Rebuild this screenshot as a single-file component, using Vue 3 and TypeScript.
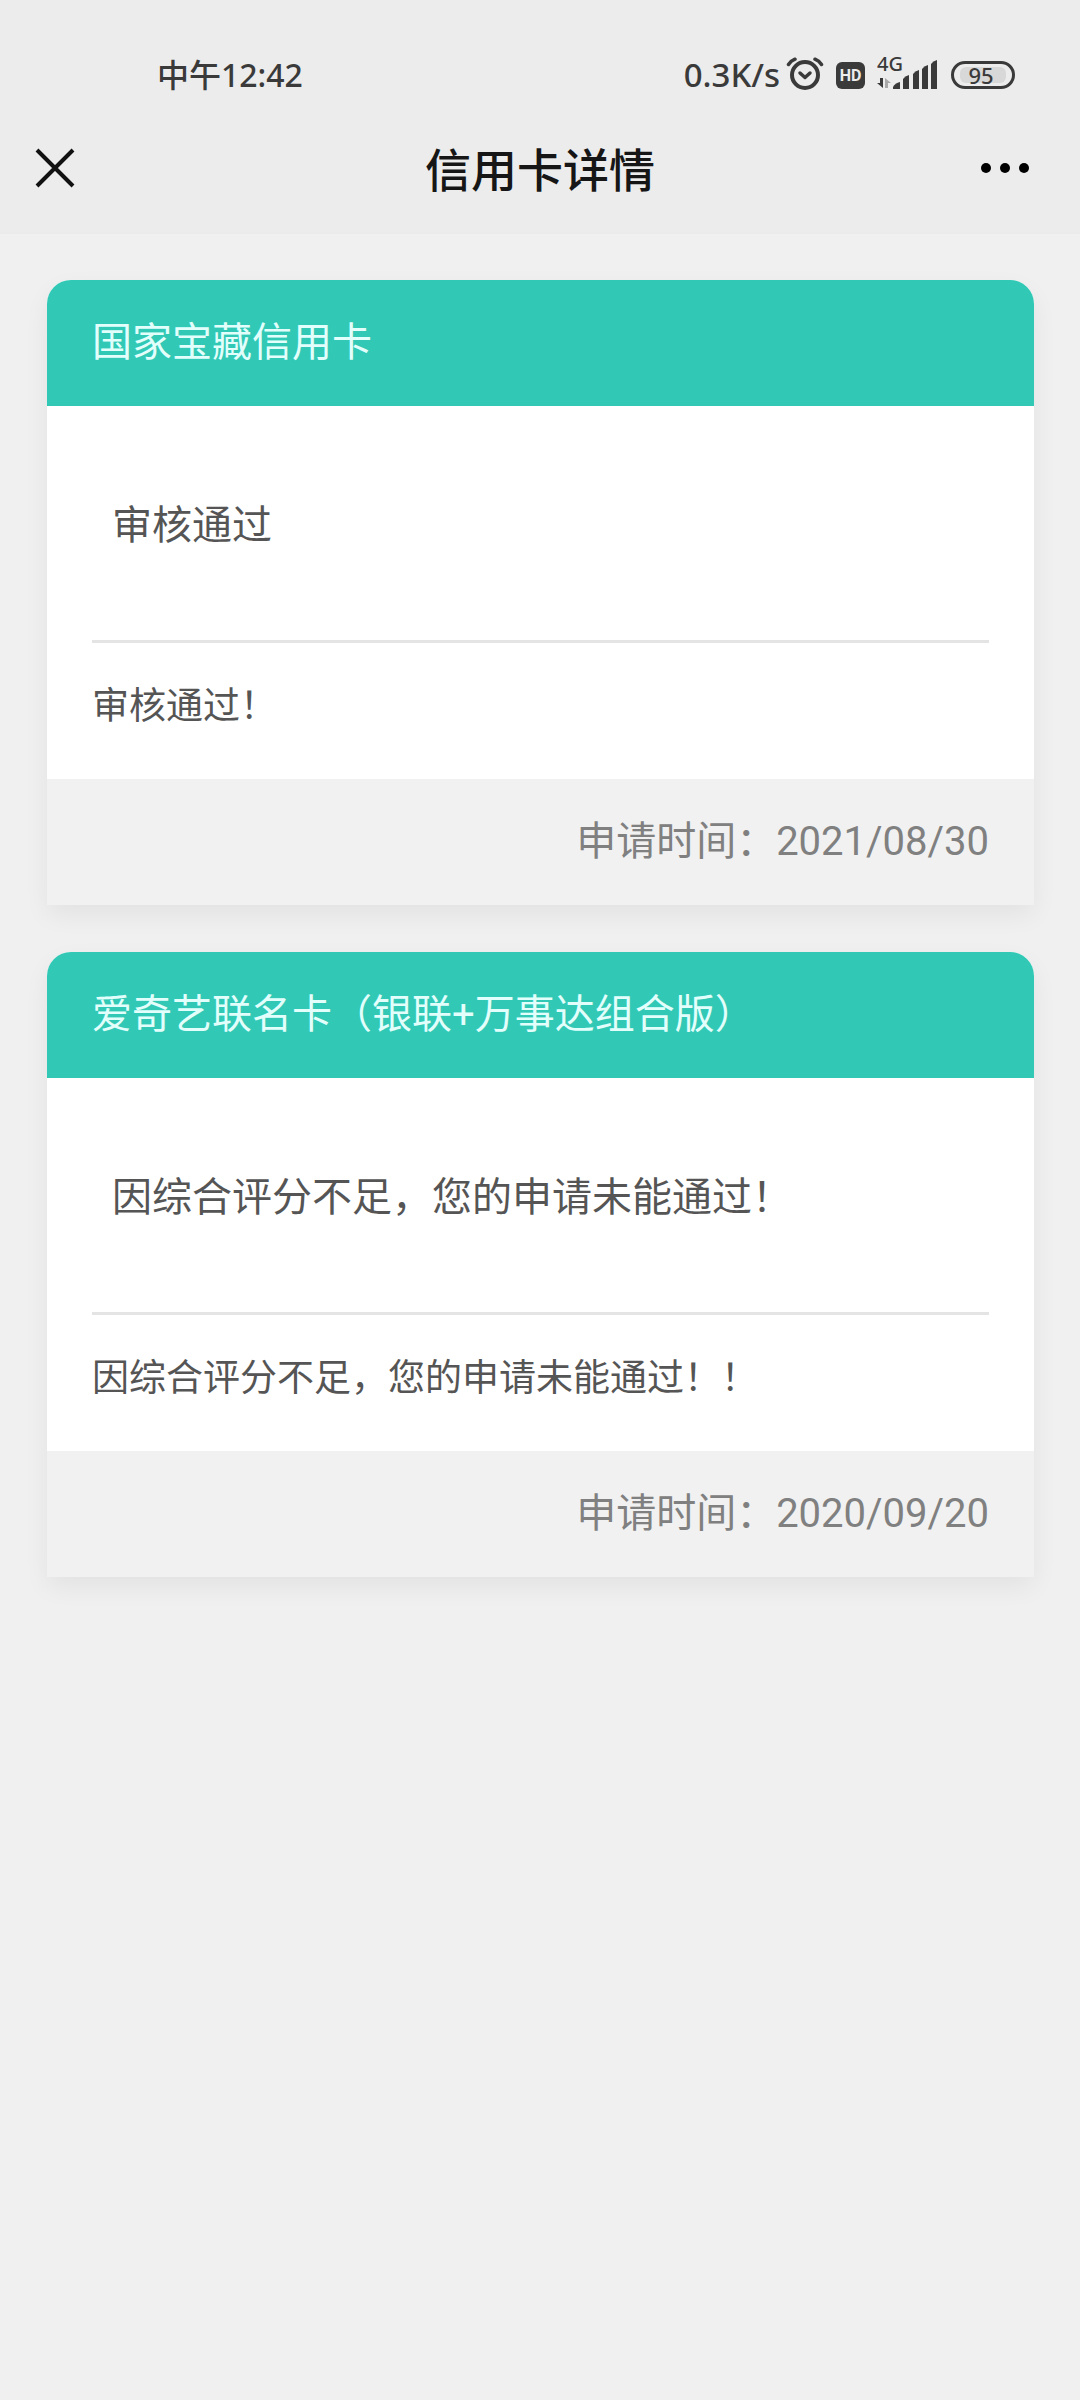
<script setup lang="ts">
interface Application {
  id: number
  name: string
  status: string
  detail: string
  appliedOn: string
}

const pageTitle = '信用卡详情'

const applications: Application[] = [
  {
    id: 1,
    name: '国家宝藏信用卡',
    status: '审核通过',
    detail: '审核通过！',
    appliedOn: '2021/08/30',
  },
  {
    id: 2,
    name: '爱奇艺联名卡（银联+万事达组合版）',
    status: '因综合评分不足，您的申请未能通过！',
    detail: '因综合评分不足，您的申请未能通过！！',
    appliedOn: '2020/09/20',
  },
]
</script>

<template>
  <div class="page">
    <header class="top">
      <div class="status-bar">
        <span class="clock">中午12:42</span>
        <div class="indicators">
          <div class="speed">
            <span>0.3K/s</span>
            <svg class="alarm" width="38" height="36" viewBox="0 0 38 36" aria-hidden="true">
              <g fill="none" stroke="#3a3a3a" stroke-width="4" stroke-linecap="round" stroke-linejoin="round">
                <circle cx="19" cy="18" r="13" />
                <path d="M14 16l5 4.500l5-4.500" stroke-width="3.500" />
                <path d="M2.500 7.500Q5 3.800 9 2.200M35.500 7.500Q33 3.800 29 2.200" stroke-width="3.500" />
              </g>
            </svg>
          </div>
          <span class="hd">HD</span>
          <svg class="signal" width="62" height="56" viewBox="0 -10 62 56" aria-hidden="true">
            <text class="network" x="0" y="14">4G</text>
            <g fill="#3a3a3a">
              <path d="M3 21h3v10L0 26h3z" />
              <path d="M8 31V21l6 5h-3v5z" fill="#a8a8a8" />
              <path d="M16 32v-2q2-4 7-5v7z" />
              <path d="M26 32V22q2-3 6-4v14z" />
              <path d="M36 32V17q2-3 6-4v19z" />
              <path d="M45 32V12q2-3 6-4v24z" />
              <path d="M54 32V7q2-3 6-4v29z" />
            </g>
          </svg>
          <span class="battery"><span class="charge">95</span></span>
        </div>
      </div>
      <nav class="nav">
        <button class="nav-button" type="button" aria-label="关闭">
          <svg width="40" height="40" viewBox="0 0 40 40" aria-hidden="true">
            <path d="M2 2L38 38M38 2L2 38" stroke="#111" stroke-width="4" fill="none" />
          </svg>
        </button>
        <h1 class="title">{{ pageTitle }}</h1>
        <button class="nav-button" type="button" aria-label="更多">
          <svg width="50" height="12" viewBox="0 0 50 12" aria-hidden="true">
            <circle cx="6" cy="6" r="5" />
            <circle cx="25" cy="6" r="5" />
            <circle cx="44" cy="6" r="5" />
          </svg>
        </button>
      </nav>
    </header>

    <main class="list">
      <article v-for="item in applications" :key="item.id" class="card">
        <h2 class="card-head">{{ item.name }}</h2>
        <div class="card-body">
          <p class="result">{{ item.status }}</p>
          <p class="detail">{{ item.detail }}</p>
        </div>
        <footer class="card-foot">
          申请时间：<time :datetime="item.appliedOn.replace(/\//g, '-')">{{ item.appliedOn }}</time>
        </footer>
      </article>
    </main>
  </div>
</template>

<style>
body {
  margin: 0;
  background: #f0f0f0;
}
</style>

<style scoped>
.page {
  font-family: Roboto, "Noto Sans CJK SC", sans-serif;
  color: #555;
}

.top {
  background: #ececec;
  border-bottom: 2px solid #ebebeb;
}

.status-bar {
  display: flex;
  align-items: center;
  justify-content: space-between;
  padding: 47px 65px 0 157px;
  height: 56px;
  font-family: "Noto Sans", "Noto Sans CJK SC", sans-serif;
  font-size: 32px;
  font-weight: 500;
  line-height: 56px;
  color: #3a3a3a;
}

.indicators {
  display: flex;
  align-items: center;
  gap: 12px;
}

.speed {
  display: flex;
  align-items: center;
  gap: 6px;
  font-size: 33px;
}

.hd {
  width: 29px;
  height: 27px;
  border-radius: 6px;
  background: #3a3a3a;
  color: #ececec;
  font-family: Roboto, sans-serif;
  font-size: 16px;
  font-weight: 700;
  line-height: 27px;
  text-align: center;
}

.network {
  font-size: 20px;
  fill: #3a3a3a;
}

.battery {
  box-sizing: border-box;
  width: 64px;
  height: 28px;
  padding: 3px 6px;
  border: 3px solid #3a3a3a;
  border-radius: 14px;
}

.charge {
  display: block;
  height: 16px;
  padding-right: 4px;
  border-radius: 6px;
  background: #d8d8d8;
  font-size: 22px;
  line-height: 16px;
  text-align: center;
}

.nav {
  display: flex;
  align-items: center;
  justify-content: space-between;
  height: 128px;
  padding: 1px 50px 0 35px;
}

.nav-button {
  display: flex;
  align-items: center;
  width: 50px;
  height: 50px;
  padding: 0;
  border: 0;
  background: none;
}

.title {
  flex: 1;
  margin: 0;
  padding: 6px 0 0 15px;
  font-size: 46px;
  font-weight: 500;
  line-height: 64px;
  text-align: center;
  color: #161616;
}

.list {
  display: flex;
  flex-direction: column;
  gap: 47px;
  padding: 46px 46px 46px 47px;
}

.card {
  border-radius: 24px 24px 0 0;
  background: #fff;
  box-shadow: 0 10px 26px rgba(0, 0, 0, 0.06);
  font-size: 40px;
}

.card-head {
  margin: 0;
  padding: 33px 45px;
  border-radius: 24px 24px 0 0;
  background: #31c9b6;
  color: #e2fffc;
  font-size: 40px;
  font-weight: 400;
  line-height: 60px;
}

.card-body {
  padding: 0 45px;
}

.result {
  margin: 0;
  padding: 90px 20px 84px;
  border-bottom: 3px solid #e4e4e4;
  line-height: 60px;
}

.detail {
  margin: 0;
  padding: 34px 0 42px;
  font-size: 37px;
  line-height: 60px;
}

.card-foot {
  padding: 33px 45px;
  background: #f1f1f1;
  color: #808080;
  line-height: 60px;
  text-align: right;
}
</style>
